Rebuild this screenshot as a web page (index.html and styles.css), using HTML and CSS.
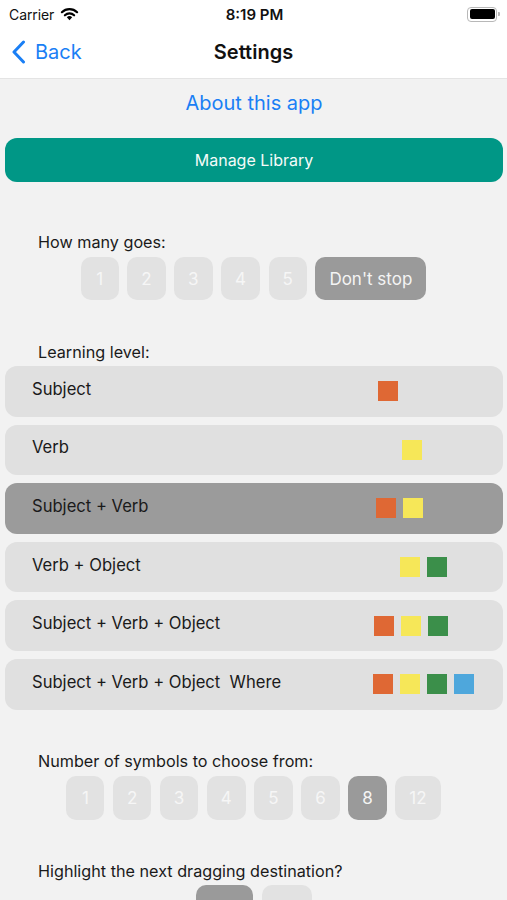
FILE: index.html
```html
<!DOCTYPE html>
<html>
<head>
<meta charset="utf-8">
<link rel="stylesheet" href="styles.css">
</head>
<body>
<header class="top">
  <div class="status">
    <div class="status-left">
      <span class="carrier">Carrier</span>
      <svg class="wifi" width="19" height="14" viewBox="0 0 18 14">
        <path d="M9 13.2 L6.3 10.3 A3.9 3.9 0 0 1 11.7 10.3 Z" fill="#000"/>
        <path d="M4.4 8.3 A6.6 6.6 0 0 1 13.6 8.3" fill="none" stroke="#000" stroke-width="2.2" stroke-linecap="round"/>
        <path d="M1.4 5.2 A10.8 10.8 0 0 1 16.6 5.2" fill="none" stroke="#000" stroke-width="2.2" stroke-linecap="round"/>
      </svg>
    </div>
    <div class="time">8:19 PM</div>
    <div class="status-right">
      <div class="battery"><div class="battery-fill"></div></div>
      <div class="battery-cap"></div>
    </div>
  </div>
  <nav class="navbar">
    <div class="back">
      <svg class="chevron" width="15" height="24" viewBox="0 0 15 24">
        <path d="M12.5 2 L3 12 L12.5 22" fill="none" stroke="#1a7ff5" stroke-width="3" stroke-linecap="round" stroke-linejoin="round"/>
      </svg>
      <span>Back</span>
    </div>
    <div class="title">Settings</div>
    <div></div>
  </nav>
</header>

<main class="content">
  <div class="about">About this app</div>
  <div class="manage">Manage Library</div>

  <section class="group goes">
    <div class="label">How many goes:</div>
    <div class="choices">
      <div class="chip">1</div>
      <div class="chip">2</div>
      <div class="chip">3</div>
      <div class="chip">4</div>
      <div class="chip">5</div>
      <div class="chip on">Don't stop</div>
    </div>
  </section>

  <section class="group levels-group">
    <div class="label">Learning level:</div>
    <div class="levels">
      <div class="level">
        <span class="level-name">Subject</span>
        <div class="swatches s1"><i class="sq orange"></i></div>
      </div>
      <div class="level">
        <span class="level-name">Verb</span>
        <div class="swatches s2"><i class="sq yellow"></i></div>
      </div>
      <div class="level on">
        <span class="level-name">Subject + Verb</span>
        <div class="swatches s3"><i class="sq orange"></i><i class="sq yellow"></i></div>
      </div>
      <div class="level">
        <span class="level-name">Verb + Object</span>
        <div class="swatches s4"><i class="sq yellow"></i><i class="sq green"></i></div>
      </div>
      <div class="level">
        <span class="level-name">Subject + Verb + Object</span>
        <div class="swatches s5"><i class="sq orange"></i><i class="sq yellow"></i><i class="sq green"></i></div>
      </div>
      <div class="level">
        <span class="level-name">Subject + Verb + Object&nbsp; Where</span>
        <div class="swatches s6"><i class="sq orange"></i><i class="sq yellow"></i><i class="sq green"></i><i class="sq blue"></i></div>
      </div>
    </div>
  </section>

  <section class="group symbols">
    <div class="label">Number of symbols to choose from:</div>
    <div class="choices">
      <div class="chip">1</div>
      <div class="chip">2</div>
      <div class="chip">3</div>
      <div class="chip">4</div>
      <div class="chip">5</div>
      <div class="chip">6</div>
      <div class="chip on">8</div>
      <div class="chip">12</div>
    </div>
  </section>

  <section class="group highlight">
    <div class="label">Highlight the next dragging destination?</div>
    <div class="choices">
      <div class="chip on yes"></div>
      <div class="chip no"></div>
    </div>
  </section>
</main>
</body>
</html>
```

FILE: styles.css
```css
html, body {
  margin: 0;
  padding: 0;
}
body {
  background: #f2f2f2;
  font-family: Inter, "Noto Sans", "Liberation Sans", sans-serif;
  color: #1c1c1c;
  width: 507px;
  height: 900px;
  overflow: hidden;
}

.top {
  background: #fff;
  border-bottom: 1px solid #e4e4e4;
}

.status {
  height: 28px;
  display: grid;
  grid-template-columns: 1fr auto 1fr;
  align-items: center;
  padding: 0 7px 0 9px;
}
.status-left {
  display: flex;
  align-items: center;
  gap: 6px;
}
.carrier {
  font-size: 14px;
  color: #111;
  letter-spacing: -0.1px;
}
.wifi { margin-top: -1px; }
.time {
  font-size: 15px;
  font-weight: 600;
  color: #111;
}
.status-right {
  display: flex;
  align-items: center;
  justify-content: flex-end;
  gap: 1px;
}
.battery {
  width: 25px;
  height: 10px;
  border: 1.5px solid #b8b8b8;
  border-radius: 4px;
  padding: 1.5px;
  display: flex;
}
.battery-fill {
  flex: 1;
  background: #000;
  border-radius: 2px;
}
.battery-cap {
  width: 2px;
  height: 4px;
  background: #b8b8b8;
  border-radius: 0 1px 1px 0;
}

.navbar {
  height: 50px;
  display: grid;
  grid-template-columns: 1fr auto 1fr;
  align-items: center;
  padding: 0 11px;
}
.back {
  display: flex;
  align-items: center;
  gap: 9px;
  color: #1a7ff5;
  font-size: 20px;
  margin-top: -2px;
}
.title {
  font-size: 20px;
  font-weight: 600;
  color: #111;
  margin-top: -2px;
}

.content {
  padding: 0 4px 0 5px;
}
.about {
  margin-top: 12px;
  text-align: center;
  font-size: 20px;
  line-height: 24px;
  color: #1a7ff5;
}
.manage {
  margin-top: 23px;
  height: 44px;
  border-radius: 12px;
  background: #009786;
  color: #f4fbf9;
  font-size: 16px;
  display: flex;
  align-items: center;
  justify-content: center;
}

.group {
  display: flex;
  flex-direction: column;
}
.label {
  font-size: 16.2px;
  line-height: 20px;
  padding-left: 33px;
  color: #1a1a1a;
}
.goes { margin-top: 50px; }
.levels-group { margin-top: 42px; }
.symbols { margin-top: 41px; }
.highlight { margin-top: 41px; }

.choices {
  display: flex;
  justify-content: center;
  gap: 8.5px;
  margin-top: 5px;
  padding-right: 1px;
}
.highlight .choices { margin-top: 4px; gap: 9px; }
.chip {
  height: 43px;
  min-width: 10px;
  padding: 0 14px;
  border-radius: 10px;
  background: #e2e2e2;
  color: #f6f6f6;
  font-size: 17px;
  display: flex;
  align-items: center;
  justify-content: center;
}
.symbols .chip { height: 44px; }
.highlight .chip { height: 44px; padding: 0; }
.highlight .yes { width: 57px; }
.highlight .no { width: 50px; }
.chip.on {
  background: #9a9a9a;
  color: #f4f4f4;
}

.levels {
  margin-top: 4px;
  display: flex;
  flex-direction: column;
  gap: 8px;
}
.level {
  height: 50.6px;
  border-radius: 12px;
  background: #e0e0e0;
  display: flex;
  align-items: center;
  padding-left: 27px;
}
.level.on { background: #9b9b9b; }
.level-name {
  font-size: 16.6px;
  color: #1a1a1a;
  margin-top: -5px;
  flex: 1;
}
.swatches {
  display: flex;
  gap: 7px;
}
.s1 { margin-right: 105px; }
.s2 { margin-right: 81px; }
.s3 { margin-right: 80px; }
.s4 { margin-right: 56px; }
.s5 { margin-right: 55px; }
.s6 { margin-right: 29px; }
.sq {
  display: block;
  width: 20px;
  height: 20px;
}
.orange { background: #df6834; }
.yellow { background: #f6e758; }
.green { background: #3b8f4a; }
.blue { background: #4ea7dc; }
```
